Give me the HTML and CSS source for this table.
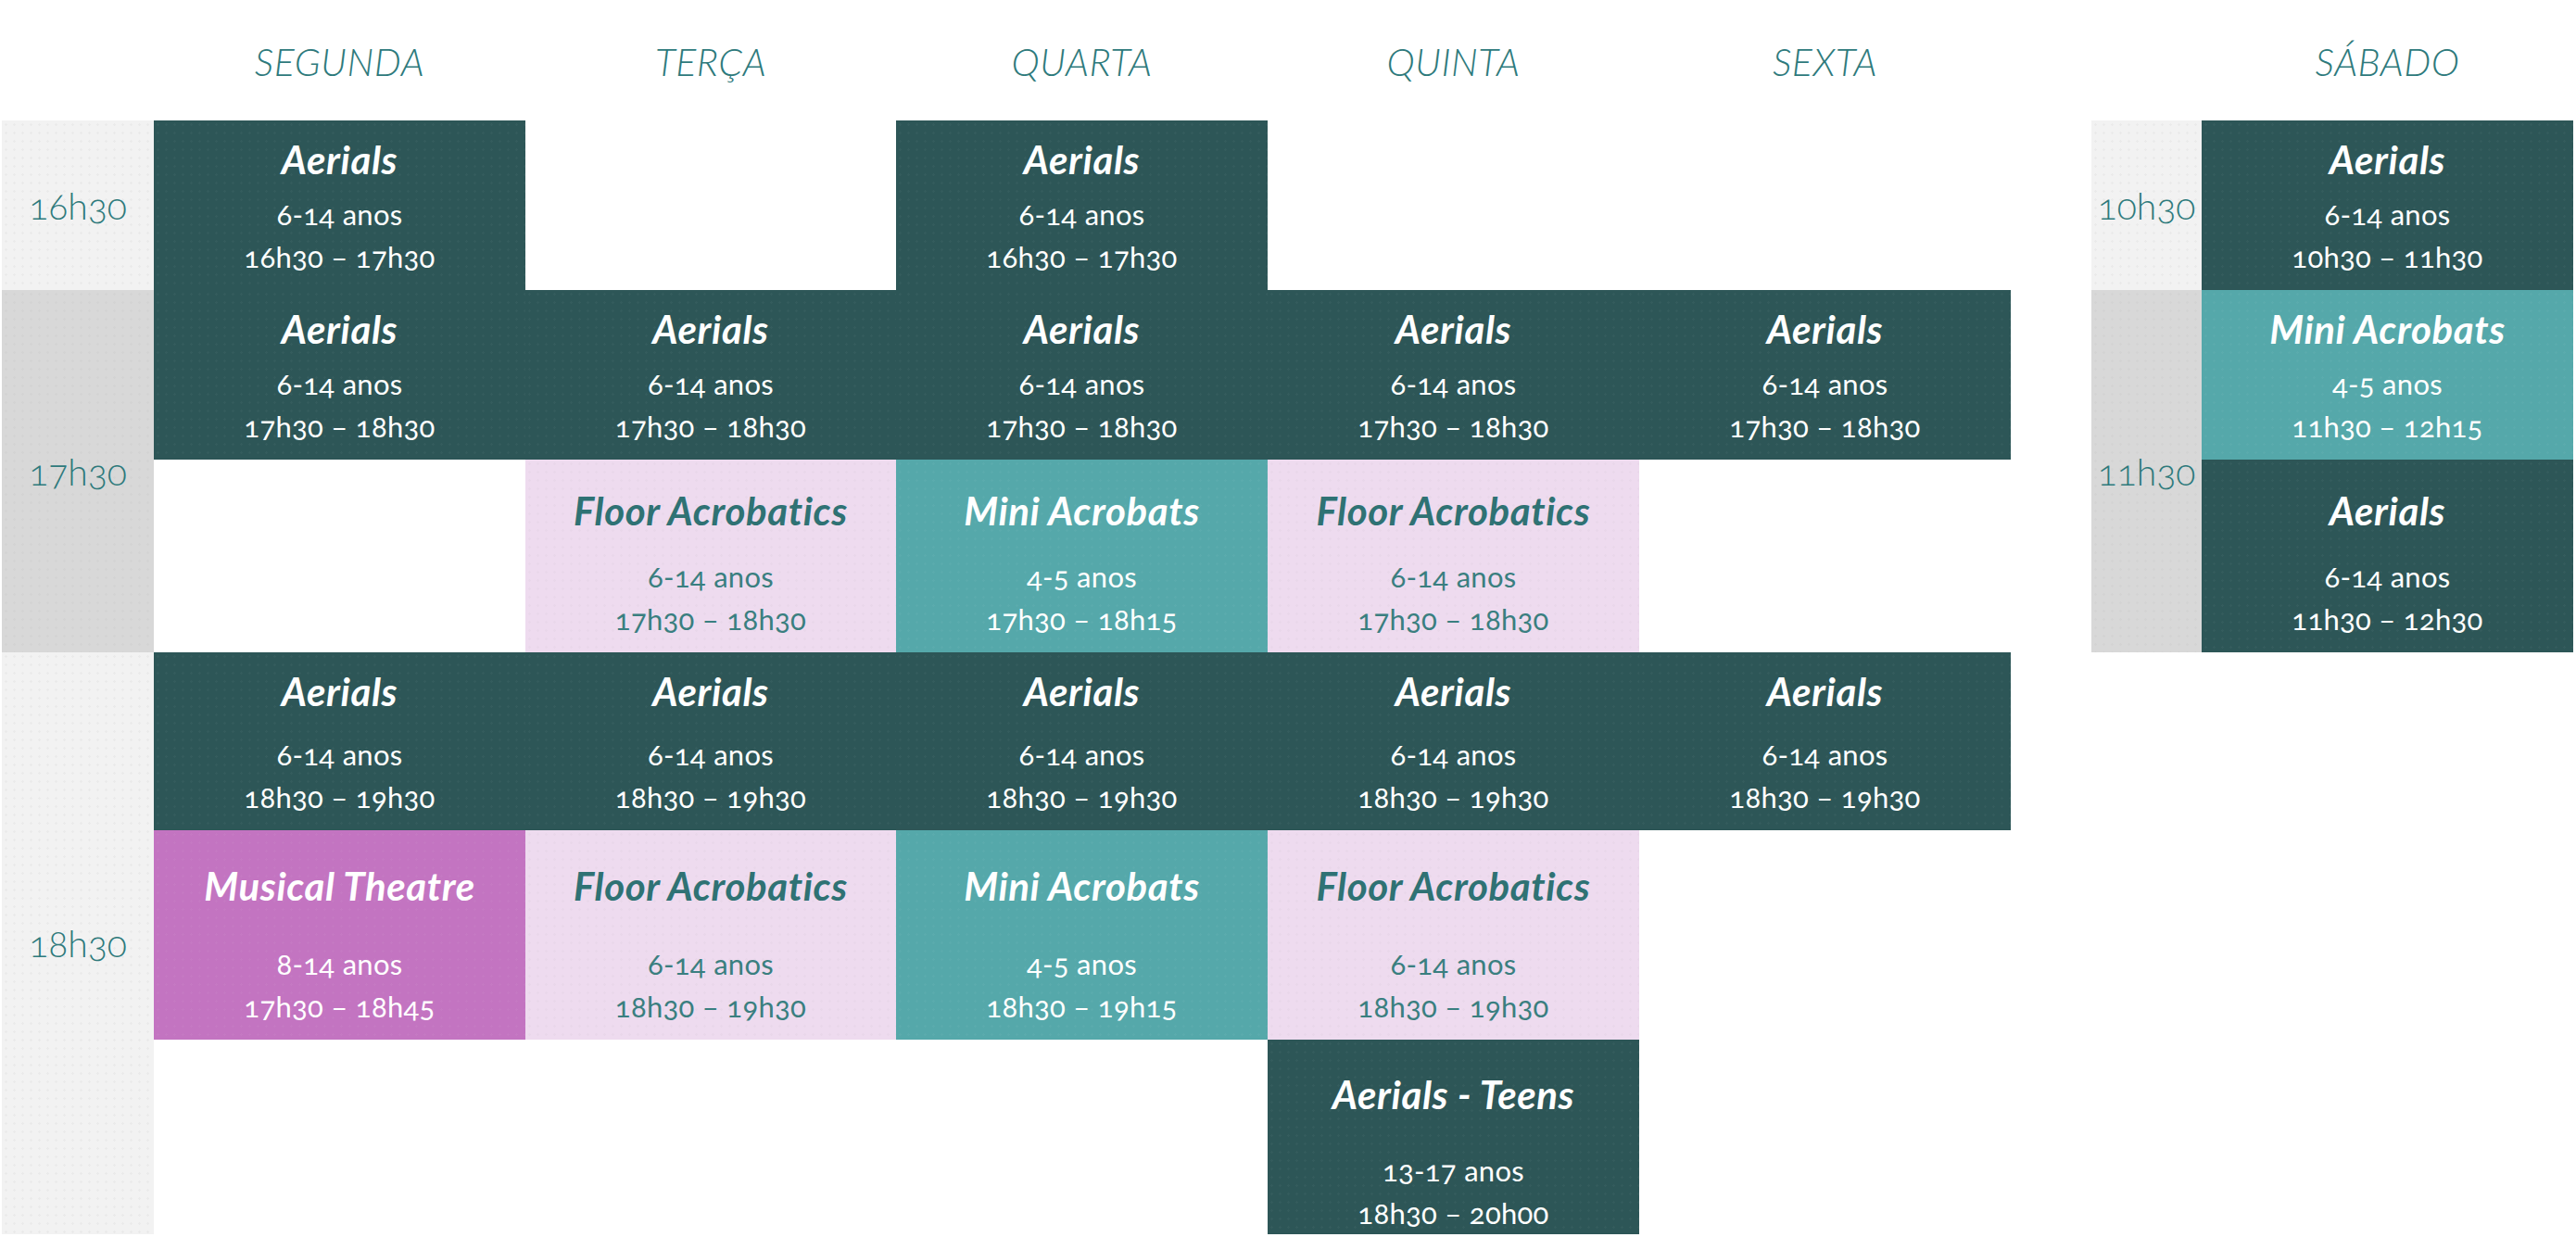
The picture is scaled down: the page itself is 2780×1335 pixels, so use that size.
FILE: index.html
```html
<!DOCTYPE html>
<html lang="pt">
<head>
<meta charset="utf-8">
<title>Horário</title>
<link rel="stylesheet" href="styles.css">
</head>
<body>
<div class="schedule">
  <div class="day c-seg">SEGUNDA</div>
  <div class="day c-ter">TERÇA</div>
  <div class="day c-qua">QUARTA</div>
  <div class="day c-qui">QUINTA</div>
  <div class="day c-sex">SEXTA</div>
  <div class="day c-sab">SÁBADO</div>

  <div class="time light c-time t-1630">16h30</div>
  <div class="time grey c-time t-1730">17h30</div>
  <div class="time light c-time t-1830">18h30</div>
  <div class="time light c-stime t-1630">10h30</div>
  <div class="time grey c-stime t-1730">11h30</div>

  <!-- 16h30 row -->
  <div class="cls dark c-seg r1"><h3 class="cls-title">Aerials</h3><p class="cls-info">6-14 anos<br>16h30 – 17h30</p></div>
  <div class="cls dark c-qua r1"><h3 class="cls-title">Aerials</h3><p class="cls-info">6-14 anos<br>16h30 – 17h30</p></div>
  <div class="cls dark c-sab r1"><h3 class="cls-title">Aerials</h3><p class="cls-info">6-14 anos<br>10h30 – 11h30</p></div>

  <!-- 17h30 row a -->
  <div class="cls dark c-seg r2"><h3 class="cls-title">Aerials</h3><p class="cls-info">6-14 anos<br>17h30 – 18h30</p></div>
  <div class="cls dark c-ter r2"><h3 class="cls-title">Aerials</h3><p class="cls-info">6-14 anos<br>17h30 – 18h30</p></div>
  <div class="cls dark c-qua r2"><h3 class="cls-title">Aerials</h3><p class="cls-info">6-14 anos<br>17h30 – 18h30</p></div>
  <div class="cls dark c-qui r2"><h3 class="cls-title">Aerials</h3><p class="cls-info">6-14 anos<br>17h30 – 18h30</p></div>
  <div class="cls dark c-sex r2"><h3 class="cls-title">Aerials</h3><p class="cls-info">6-14 anos<br>17h30 – 18h30</p></div>
  <div class="cls teal c-sab r2"><h3 class="cls-title">Mini Acrobats</h3><p class="cls-info">4-5 anos<br>11h30 – 12h15</p></div>

  <!-- 17h30 row b -->
  <div class="cls pink c-ter r3"><h3 class="cls-title">Floor Acrobatics</h3><p class="cls-info">6-14 anos<br>17h30 – 18h30</p></div>
  <div class="cls teal c-qua r3"><h3 class="cls-title">Mini Acrobats</h3><p class="cls-info">4-5 anos<br>17h30 – 18h15</p></div>
  <div class="cls pink c-qui r3"><h3 class="cls-title">Floor Acrobatics</h3><p class="cls-info">6-14 anos<br>17h30 – 18h30</p></div>
  <div class="cls dark c-sab r3"><h3 class="cls-title">Aerials</h3><p class="cls-info">6-14 anos<br>11h30 – 12h30</p></div>

  <!-- 18h30 row a -->
  <div class="cls dark c-seg r4"><h3 class="cls-title">Aerials</h3><p class="cls-info">6-14 anos<br>18h30 – 19h30</p></div>
  <div class="cls dark c-ter r4"><h3 class="cls-title">Aerials</h3><p class="cls-info">6-14 anos<br>18h30 – 19h30</p></div>
  <div class="cls dark c-qua r4"><h3 class="cls-title">Aerials</h3><p class="cls-info">6-14 anos<br>18h30 – 19h30</p></div>
  <div class="cls dark c-qui r4"><h3 class="cls-title">Aerials</h3><p class="cls-info">6-14 anos<br>18h30 – 19h30</p></div>
  <div class="cls dark c-sex r4"><h3 class="cls-title">Aerials</h3><p class="cls-info">6-14 anos<br>18h30 – 19h30</p></div>

  <!-- 18h30 row b -->
  <div class="cls magenta c-seg r5"><h3 class="cls-title">Musical Theatre</h3><p class="cls-info">8-14 anos<br>17h30 – 18h45</p></div>
  <div class="cls pink c-ter r5"><h3 class="cls-title">Floor Acrobatics</h3><p class="cls-info">6-14 anos<br>18h30 – 19h30</p></div>
  <div class="cls teal c-qua r5"><h3 class="cls-title">Mini Acrobats</h3><p class="cls-info">4-5 anos<br>18h30 – 19h15</p></div>
  <div class="cls pink c-qui r5"><h3 class="cls-title">Floor Acrobatics</h3><p class="cls-info">6-14 anos<br>18h30 – 19h30</p></div>

  <!-- 18h30 row c -->
  <div class="cls dark c-qui r6"><h3 class="cls-title">Aerials - Teens</h3><p class="cls-info">13-17 anos<br>18h30 – 20h00</p></div>
</div>
</body>
</html>
```

FILE: styles.css
```css
html, body {
  margin: 0;
  padding: 0;
  background: #ffffff;
}

body {
  font-family: Lato, "Open Sans", "Liberation Sans", sans-serif;
  font-variant-numeric: oldstyle-nums;
}

.schedule {
  display: grid;
  grid-template-columns: 164px 401px 400px 401px 401px 401px 87px 119px 401px;
  grid-template-rows: 130px 183px 183px 208px 192px 226px 210px;
  padding-left: 2px;
}

/* columns */
.c-time  { grid-column: 1; }
.c-seg   { grid-column: 2; }
.c-ter   { grid-column: 3; }
.c-qua   { grid-column: 4; }
.c-qui   { grid-column: 5; }
.c-sex   { grid-column: 6; }
.c-stime { grid-column: 8; }
.c-sab   { grid-column: 9; }

/* day headers */
.day {
  grid-row: 1;
  display: flex;
  align-items: center;
  justify-content: center;
  font-style: italic;
  font-weight: 300;
  font-size: 41px;
  letter-spacing: 0.5px;
  color: #2e7a7c;
  padding-top: 2px;
}

/* time labels */
.time {
  display: flex;
  align-items: center;
  justify-content: center;
  font-weight: 300;
  font-size: 39px;
  color: #2e7a7c;
  background-size: 9px 9px;
}

.t-1630 { grid-row: 2; }
.t-1730 { grid-row: 3 / span 2; }
.t-1830 { grid-row: 5 / span 3; }

.light {
  background-color: #f2f2f2;
  background-image: radial-gradient(circle, rgba(0, 0, 0, 0.03) 1px, transparent 1.5px);
}

.grey {
  background-color: #d8d8d8;
  background-image: radial-gradient(circle, rgba(0, 0, 0, 0.025) 1px, transparent 1.5px);
}

/* class cells */
.cls {
  display: flex;
  flex-direction: column;
  justify-content: space-between;
  align-items: center;
  text-align: center;
  padding-bottom: 13px;
  box-sizing: border-box;
  color: #ffffff;
  background-size: 9px 9px;
  background-image: radial-gradient(circle, rgba(255, 255, 255, 0.035) 1px, transparent 1.5px);
}

.r1 { grid-row: 2; padding-top: 17px; }
.r2 { grid-row: 3; padding-top: 17px; }
.r3 { grid-row: 4; padding-top: 30px; }
.r4 { grid-row: 5; padding-top: 17px; }
.r5 { grid-row: 6; padding-top: 35px; }
.r6 { grid-row: 7; padding-top: 34px; padding-bottom: 0; }

.cls-title {
  margin: 0;
  font-style: italic;
  font-weight: 700;
  font-size: 42px;
  line-height: 50px;
  letter-spacing: 0.6px;
}

.cls-info {
  margin: 0;
  font-weight: 400;
  font-size: 31px;
  line-height: 46px;
  letter-spacing: 0.3px;
}

.dark    { background-color: #2d5657; }
.teal    { background-color: #55a8aa; }
.magenta { background-color: #c374c1; }

.pink {
  background-color: #eedbef;
  color: #3a7f80;
  background-image: radial-gradient(circle, rgba(0, 0, 0, 0.02) 1px, transparent 1.5px);
}

.pink .cls-title { color: #2f7274; }
```
